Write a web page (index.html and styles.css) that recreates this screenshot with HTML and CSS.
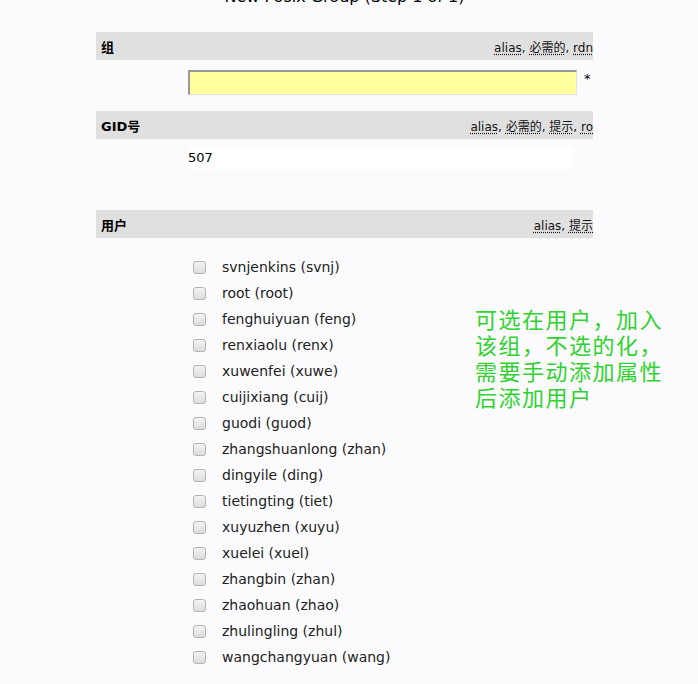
FILE: index.html
```html
<!DOCTYPE html>
<html>
<head>
<meta charset="utf-8">
<link rel="stylesheet" href="styles.css">
</head>
<body>
<div class="page">
  <h1 class="title">New Posix Group (Step 1 of 1)</h1>

  <div class="bar">
    <span class="bar-label">组</span>
    <span class="bar-meta"><u>alias</u>, <u>必需的</u>, <u>rdn</u></span>
  </div>
  <div class="field-row">
    <div class="text-input required"></div>
    <span class="star">*</span>
  </div>

  <div class="bar bar-gid">
    <span class="bar-label">GID号</span>
    <span class="bar-meta"><u>alias</u>, <u>必需的</u>, <u>提示</u>, <u>ro</u></span>
  </div>
  <div class="field-row field-gid">
    <div class="text-value">507</div>
  </div>

  <div class="bar bar-users">
    <span class="bar-label">用户</span>
    <span class="bar-meta"><u>alias</u>, <u>提示</u></span>
  </div>

  <div class="users">
    <ul class="user-list">
      <li><span class="cb"></span><span class="name">svnjenkins (svnj)</span></li>
      <li><span class="cb"></span><span class="name">root (root)</span></li>
      <li><span class="cb"></span><span class="name">fenghuiyuan (feng)</span></li>
      <li><span class="cb"></span><span class="name">renxiaolu (renx)</span></li>
      <li><span class="cb"></span><span class="name">xuwenfei (xuwe)</span></li>
      <li><span class="cb"></span><span class="name">cuijixiang (cuij)</span></li>
      <li><span class="cb"></span><span class="name">guodi (guod)</span></li>
      <li><span class="cb"></span><span class="name">zhangshuanlong (zhan)</span></li>
      <li><span class="cb"></span><span class="name">dingyile (ding)</span></li>
      <li><span class="cb"></span><span class="name">tietingting (tiet)</span></li>
      <li><span class="cb"></span><span class="name">xuyuzhen (xuyu)</span></li>
      <li><span class="cb"></span><span class="name">xuelei (xuel)</span></li>
      <li><span class="cb"></span><span class="name">zhangbin (zhan)</span></li>
      <li><span class="cb"></span><span class="name">zhaohuan (zhao)</span></li>
      <li><span class="cb"></span><span class="name">zhulingling (zhul)</span></li>
      <li><span class="cb"></span><span class="name">wangchangyuan (wang)</span></li>
    </ul>
    <p class="note">可选在用户，加入<br>该组，不选的化，<br>需要手动添加属性<br>后添加用户</p>
  </div>
</div>
</body>
</html>
```

FILE: styles.css
```css
html, body {
  margin: 0;
  padding: 0;
  background: #fbfbfd;
  font-family: "DejaVu Sans", Verdana, "Noto Sans CJK SC", sans-serif;
  color: #000;
  overflow: hidden;
}

.page {
  width: 497px;
  margin-left: 96px;
}

.title {
  margin: -13px 0 25px 0;
  height: 20px;
  line-height: 20px;
  font-size: 16px;
  font-weight: normal;
  text-align: center;
  white-space: nowrap;
}

.bar {
  height: 28px;
  background: #e0e0e0;
  display: flex;
  align-items: center;
  justify-content: space-between;
  padding-left: 5px;
  overflow: hidden;
  white-space: nowrap;
}

.bar-label {
  font-size: 13px;
  font-weight: bold;
  font-family: "DejaVu Sans", "Noto Sans CJK SC", sans-serif;
}

.bar-meta {
  font-size: 12px;
  font-family: "DejaVu Sans", "Noto Sans CJK SC", sans-serif;
  color: #111;
}

.bar-meta u {
  text-decoration: underline dotted;
  text-underline-offset: 2px;
}

.field-row {
  display: flex;
  align-items: flex-start;
  padding-left: 92px;
  margin-top: 10px;
}

.text-input {
  width: 386px;
  height: 22px;
  background: #ffff9e;
  border-top: 2px solid #999;
  border-left: 2px solid #999;
  border-right: 1px solid #e4e4e4;
  border-bottom: 1px solid #e4e4e4;
}

.star {
  font-size: 13px;
  margin-left: 7px;
  margin-top: 1px;
}

.bar-gid {
  margin-top: 16px;
}

.field-gid {
  margin-top: 8px;
}

.text-value {
  width: 385px;
  height: 22px;
  line-height: 22px;
  background: #fff;
  font-size: 13px;
}

.bar-users {
  margin-top: 41px;
}

.users {
  display: flex;
  align-items: flex-start;
}

.user-list {
  list-style: none;
  margin: 16px 0 0 97px;
  padding: 0;
  width: 282px;
  flex: none;
}

.user-list li {
  height: 26px;
  display: flex;
  align-items: center;
}

.cb {
  width: 11px;
  height: 11px;
  border: 1px solid #b4b4b4;
  border-radius: 3px;
  background: linear-gradient(#f4f4f4, #dcdcdc);
  flex: none;
}

.name {
  margin-left: 16px;
  font-size: 14px;
  color: #222;
  white-space: nowrap;
}

.note {
  flex: none;
  margin: 67px 0 0 0;
  font-family: "Noto Sans CJK SC", sans-serif;
  font-size: 22px;
  line-height: 26px;
  letter-spacing: 1.5px;
  color: #2fd22f;
  white-space: nowrap;
}
```
